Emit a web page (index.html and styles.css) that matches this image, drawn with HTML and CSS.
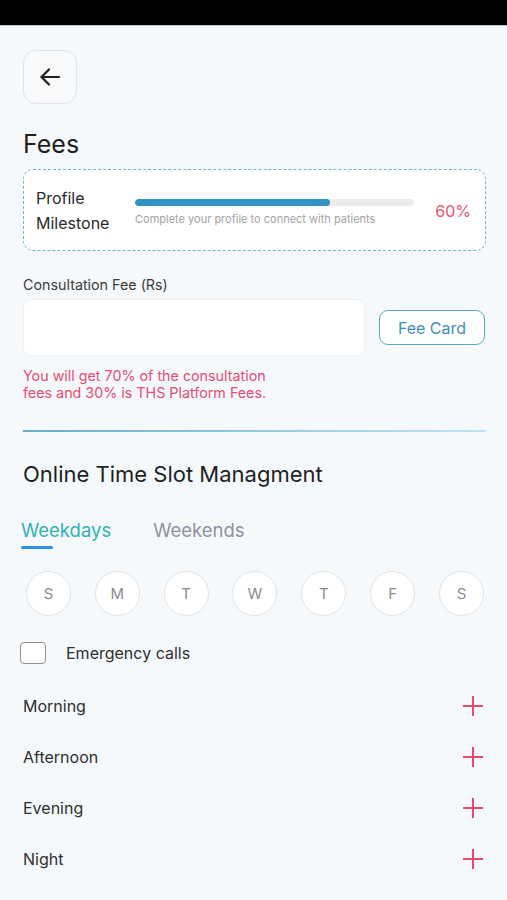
FILE: index.html
```html
<!DOCTYPE html>
<html lang="en">
<head>
  <title>Fees</title>
  <meta charset="UTF-8">
  <meta name="viewport" content="width=device-width, initial-scale=1">
  <link rel="stylesheet" href="styles.css">
</head>
<body>
  <div class="status-bar"></div>
  <div class="page">
    <button class="back-button" aria-label="Back">
      <svg width="24" height="24" viewBox="0 0 24 24" fill="none" stroke="#1e1e1e" stroke-width="2.2" stroke-linecap="round" stroke-linejoin="round">
        <path d="M21 12H3.5"/>
        <path d="M11 4.5L3.5 12l7.5 7.5"/>
      </svg>
    </button>

    <h1 class="page-title">Fees</h1>

    <!-- profile milestone -->
    <div class="milestone">
      <div class="milestone-label">Profile<br>Milestone</div>
      <div class="milestone-progress">
        <div class="progress-track">
          <div class="progress-fill" style="width: 70%;"></div>
        </div>
        <p class="progress-caption">Complete your profile to connect with patients</p>
      </div>
      <div class="milestone-percent">60%</div>
    </div>

    <label class="field-label" for="fee">Consultation Fee (Rs)</label>
    <div class="fee-row">
      <input class="fee-input" id="fee" type="text">
      <button class="fee-card-button">Fee Card</button>
    </div>
    <p class="fee-note">You will get 70% of the consultation<br>fees and 30% is THS Platform Fees.</p>

    <div class="divider"></div>

    <h2 class="section-title">Online Time Slot Managment</h2>

    <div class="tabs">
      <div class="tab tab-active">Weekdays</div>
      <div class="tab">Weekends</div>
    </div>

    <div class="days">
      <div class="day">S</div>
      <div class="day">M</div>
      <div class="day">T</div>
      <div class="day">W</div>
      <div class="day">T</div>
      <div class="day">F</div>
      <div class="day">S</div>
    </div>

    <label class="emergency">
      <span class="checkbox"></span>
      <span>Emergency calls</span>
    </label>

    <div class="slot">
      <span>Morning</span>
      <svg class="plus" width="22" height="22" viewBox="0 0 22 22" stroke="#e94a70" stroke-width="2"><path d="M11 1v20M1 11h20"/></svg>
    </div>
    <div class="slot">
      <span>Afternoon</span>
      <svg class="plus" width="22" height="22" viewBox="0 0 22 22" stroke="#e94a70" stroke-width="2"><path d="M11 1v20M1 11h20"/></svg>
    </div>
    <div class="slot">
      <span>Evening</span>
      <svg class="plus" width="22" height="22" viewBox="0 0 22 22" stroke="#e94a70" stroke-width="2"><path d="M11 1v20M1 11h20"/></svg>
    </div>
    <div class="slot">
      <span>Night</span>
      <svg class="plus" width="22" height="22" viewBox="0 0 22 22" stroke="#e94a70" stroke-width="2"><path d="M11 1v20M1 11h20"/></svg>
    </div>
  </div>
</body>
</html>
```

FILE: styles.css
```css
body {
  font-family: Inter, "Noto Sans", Arial, sans-serif;
  background-color: #f6f9fc;
  margin: 0;
  padding: 0;
  color: #2b2b2b;
}

.status-bar {
  height: 25px;
  background-color: #000;
  border-bottom: 1px solid #bdbdbd;
}

.page {
  padding: 24px 21px 0 23px;
}

.back-button {
  width: 54px;
  height: 54px;
  border: 1px solid #e1e3e6;
  border-radius: 13px;
  background-color: #f7f9fb;
  display: flex;
  align-items: center;
  justify-content: center;
  padding: 0;
}

.page-title {
  font-size: 25px;
  font-weight: 400;
  color: #1f1f1f;
  margin: 24px 0 9px;
  line-height: 32px;
}

.milestone {
  display: flex;
  align-items: center;
  height: 80px;
  border: 1.5px dashed #6bb6d6;
  border-radius: 10px;
  background-color: #fff;
  padding: 0 14px 0 12px;
}

.milestone-label {
  font-size: 16px;
  line-height: 25px;
  color: #2b2b2b;
  width: 99px;
  margin-top: 2px;
}

.milestone-progress {
  width: 279px;
  padding-top: 4px;
}

.progress-track {
  height: 7px;
  border-radius: 4px;
  background-color: #ececec;
  overflow: hidden;
}

.progress-fill {
  height: 100%;
  background-color: #2f95c0;
  border-radius: 4px;
}

.progress-caption {
  font-size: 11px;
  color: #a3a3a3;
  margin: 6px 0 0;
}

.milestone-percent {
  margin-left: auto;
  font-size: 16px;
  color: #e9536f;
  padding-top: 2px;
}

.field-label {
  display: block;
  font-size: 14.3px;
  color: #3c3c3c;
  margin-top: 25px;
  line-height: 18px;
}

.fee-row {
  display: flex;
  align-items: center;
  gap: 14px;
  margin-top: 5px;
}

.fee-input {
  width: 342px;
  height: 57px;
  box-sizing: border-box;
  border: 1px solid #eef0f2;
  border-radius: 8px;
  background-color: #fff;
  outline: none;
}

.fee-card-button {
  width: 106px;
  height: 35px;
  border: 1.5px solid #5aa6c8;
  border-radius: 9px;
  background-color: #fff;
  color: #3e90b5;
  font-family: inherit;
  font-size: 16px;
  padding: 0;
}

.fee-note {
  font-size: 14.3px;
  line-height: 17px;
  color: #ea4b73;
  margin: 11px 0 0;
}

.divider {
  height: 2px;
  margin-top: 29px;
  background: linear-gradient(to right, #6aaccb, #bfe5f6);
}

.section-title {
  font-size: 22px;
  font-weight: 400;
  color: #1f1f1f;
  margin: 28px 0 0;
  line-height: 28px;
}

.tabs {
  display: flex;
  gap: 42px;
  margin: 30px 0 0 -2px;
}

.tab {
  font-size: 18.5px;
  color: #8e92a2;
  line-height: 24px;
  padding-bottom: 7px;
}

.tab-active {
  color: #2fb1b3;
  position: relative;
}

.tab-active::after {
  content: "";
  position: absolute;
  left: 0;
  bottom: 0;
  width: 32px;
  height: 3px;
  background-color: #2e8fe4;
  border-radius: 2px;
}

.days {
  display: flex;
  justify-content: space-between;
  margin: 22px 2px 0 3px;
}

.day {
  width: 43px;
  height: 43px;
  border: 1px solid #e3e3e3;
  border-radius: 50%;
  background-color: #fff;
  display: flex;
  align-items: center;
  justify-content: center;
  font-size: 15px;
  color: #8c8c8c;
}

.emergency {
  display: flex;
  align-items: center;
  gap: 20px;
  margin: 26px 0 0 -3px;
  font-size: 16px;
  color: #2f2f2f;
}

.checkbox {
  width: 24px;
  height: 20px;
  border: 1.5px solid #8f8f8f;
  border-radius: 4px;
  background-color: #fff;
}

.slot {
  display: flex;
  align-items: center;
  justify-content: space-between;
  height: 51px;
  font-size: 16px;
  color: #2f2f2f;
}

.emergency + .slot {
  margin-top: 16px;
}

.plus {
  margin-right: 2px;
}
```
